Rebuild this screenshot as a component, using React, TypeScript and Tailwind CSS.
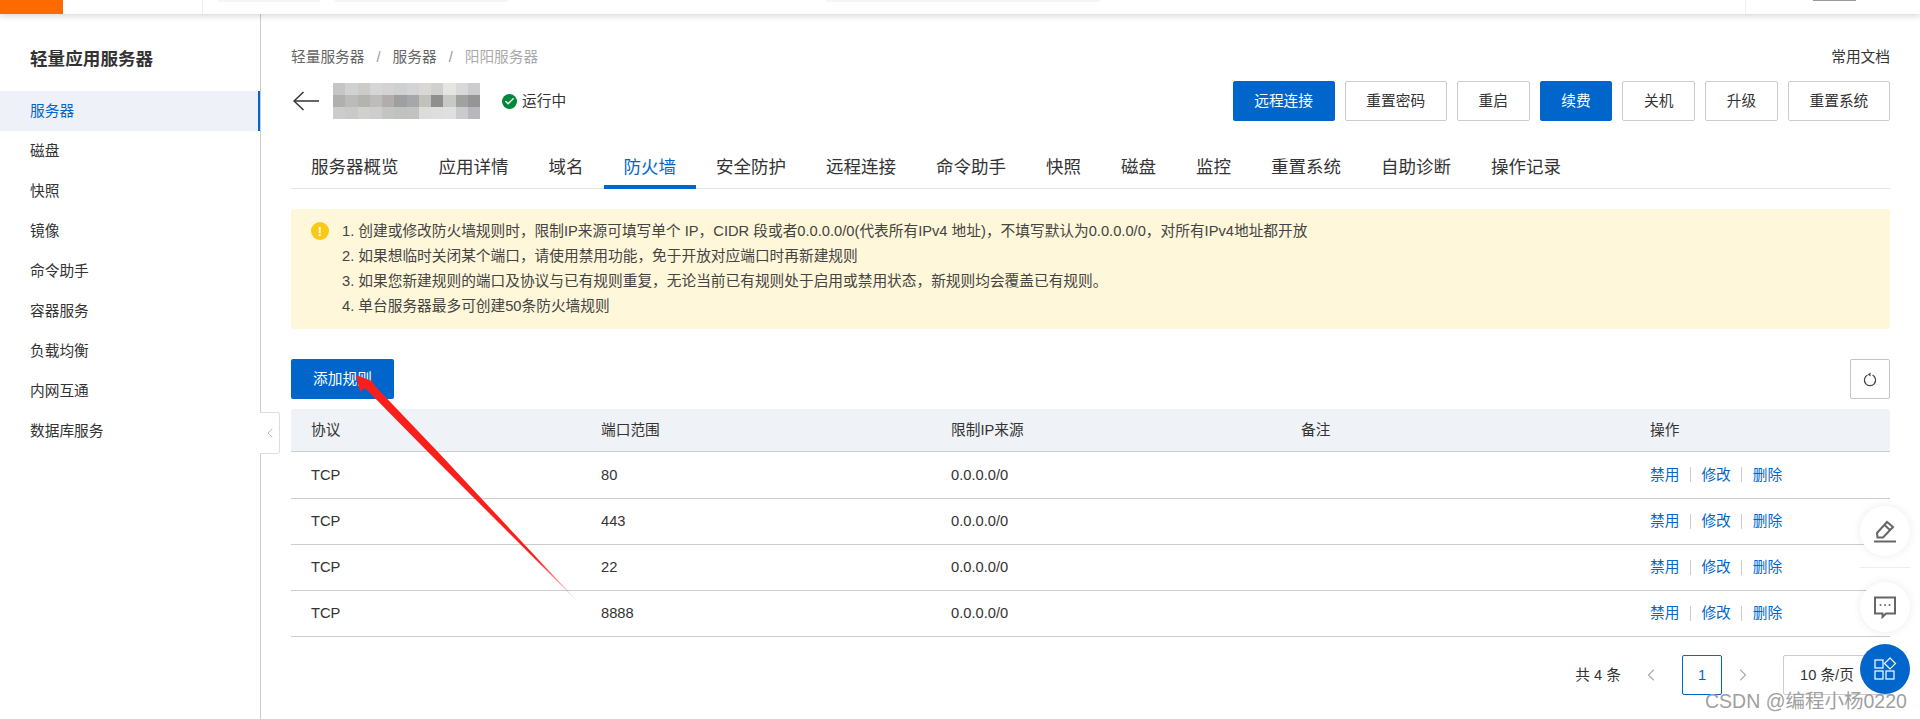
import { Check, ChevronLeft, ChevronRight } from 'lucide-react';

const menu = ['服务器', '磁盘', '快照', '镜像', '命令助手', '容器服务', '负载均衡', '内网互通', '数据库服务'];
const tabs = ['服务器概览', '应用详情', '域名', '防火墙', '安全防护', '远程连接', '命令助手', '快照', '磁盘', '监控', '重置系统', '自助诊断', '操作记录'];
const actions = [
  { label: '远程连接', primary: true },
  { label: '重置密码', primary: false },
  { label: '重启', primary: false },
  { label: '续费', primary: true },
  { label: '关机', primary: false },
  { label: '升级', primary: false },
  { label: '重置系统', primary: false },
];
const rules = ['80', '443', '22', '8888'];

// the pixelated server name
const mosaic = [
  ['#c5c5c5', '#d0d1d3', '#cccbc8', '#d6d6d6', '#d4d2d3', '#cfd0d2', '#d3d4d6', '#dbd7d4', '#d0d0d0', '#e6e5e2', '#d9d9d9', '#ccccd0'],
  ['#b0b0ae', '#bbbbbb', '#b4b4ae', '#bcbcbc', '#b4acac', '#9d9fa3', '#a6a8a8', '#c2c2bd', '#8f8f8f', '#c8c8c4', '#a0a2a0', '#959597'],
  ['#cccccc', '#c8cac8', '#d0d0cc', '#cdcdcd', '#c3c5c3', '#c0c2c0', '#c2c2c0', '#dcdcdc', '#dedede', '#e0dede', '#c8ccd0', '#b8b8bc'],
];

const App = () => {
  return (
    <div className="relative h-[719px] w-[1920px] overflow-hidden bg-white font-['Liberation_Sans','Noto_Sans_CJK_SC',sans-serif] text-[14.7px] text-[#333]">
      {/* Top bar */}
      <header className="relative z-10 flex h-[14px] shadow-[0_2px_6px_rgba(0,0,0,0.16)]">
        <div className="h-full w-[63px] bg-[#ff6a00]" />
        <div className="ml-[139px] h-full w-px bg-[#eeeeee]" />
        <div className="ml-[15px] h-[2px] w-[102px] bg-[#f5f5f5]" />
        <div className="ml-[15px] h-[2px] w-[173px] bg-[#f5f5f5]" />
        <div className="ml-[318px] h-[2px] w-[274px] bg-[#f5f5f5]" />
        <div className="ml-[645px] h-full w-px bg-[#eeeeee]" />
        <div className="ml-[67px] h-[1px] w-[43px] bg-[#999999]" />
      </header>

      <div className="flex h-[705px]">
        {/* Sidebar */}
        <aside className="relative h-full w-[261px] shrink-0 border-r border-[#cccccc]">
          <h2 className="pl-[30px] pt-[33px] text-[17.6px] font-bold leading-6">轻量应用服务器</h2>
          <nav className="mt-[20px]">
            {menu.map((item, index) => (
              <div
                key={item}
                className={
                  index === 0
                    ? 'flex h-10 items-center border-r-[2px] border-[#0066cc] bg-[#eef1f7] pl-[30px] pt-px text-[#0066cc]'
                    : 'flex h-10 items-center pl-[30px] pt-px'
                }
              >
                {item}
              </div>
            ))}
          </nav>
          <button className="absolute left-[260px] top-[398px] flex h-[42px] w-5 items-center justify-center rounded-r-[3px] border border-l-0 border-[#dddddd] bg-white text-[#bbbbbb]">
            <ChevronLeft className="h-4 w-4" strokeWidth={1.5} />
          </button>
        </aside>

        {/* Main */}
        <main className="min-w-0 flex-1 pl-[30px] pr-[30px]">
          <div className="mt-[33px] flex h-5 items-center justify-between">
            <div className="flex items-center">
              <span className="text-[#666]">轻量服务器</span>
              <span className="mx-[12px] text-[#999]">/</span>
              <span className="text-[#666]">服务器</span>
              <span className="mx-[12px] text-[#999]">/</span>
              <span className="text-[#aaa]">阳阳服务器</span>
            </div>
            <span>常用文档</span>
          </div>

          <div className="mt-[14px] flex h-10 items-center justify-between">
            <div className="flex items-center">
              <svg className="ml-[2px]" width="26" height="20" viewBox="0 0 26 20" fill="none" stroke="#333" strokeWidth="1.5">
                <path d="M1 10 H26" />
                <path d="M10.5 1 L1 10 L10.5 19" />
              </svg>
              <div className="ml-[14px] flex w-[147px] flex-col">
                {mosaic.map((row, r) => (
                  <div key={r} className="flex h-3">
                    {row.map((color, c) => (
                      <div key={c} className="h-full flex-1" style={{ backgroundColor: color }} />
                    ))}
                  </div>
                ))}
              </div>
              <div className="ml-[22px] flex h-[15px] w-[15px] items-center justify-center rounded-full bg-[#00883a] text-white">
                <Check className="h-[11px] w-[11px]" strokeWidth={3} />
              </div>
              <span className="ml-[5px]">运行中</span>
            </div>
            <div className="flex gap-[10px]">
              {actions.map(action => (
                <button
                  key={action.label}
                  className={
                    action.primary
                      ? 'h-10 rounded-[2px] border border-[#0066cc] bg-[#0066cc] px-[20.7px] text-white'
                      : 'h-10 rounded-[2px] border border-[#cccccc] bg-white px-[20.7px]'
                  }
                >
                  {action.label}
                </button>
              ))}
            </div>
          </div>

          {/* Tabs */}
          <div className="mt-[25px] flex h-[43px] border-b border-[#e1e4e8] text-[17.5px]">
            {tabs.map(tab => (
              <div
                key={tab}
                className={
                  tab === '防火墙'
                    ? 'h-[43px] border-b-4 border-[#0066cc] px-5 pt-[9px] leading-6 text-[#0066cc]'
                    : 'h-[43px] px-5 pt-[9px] leading-6'
                }
              >
                {tab}
              </div>
            ))}
          </div>

          {/* Notice */}
          <div className="mt-[20px] flex h-[120px] rounded-[3px] bg-[#fef7d9] pl-[20px] pt-[10px]">
            <div className="mt-[3px] flex h-[18px] w-[18px] shrink-0 items-center justify-center rounded-full bg-[#fbc815] text-[13px] font-bold leading-none text-white">!</div>
            <div className="ml-[13px] leading-[25px] text-[#444]">
              <p>1. 创建或修改防火墙规则时，限制IP来源可填写单个 IP，CIDR 段或者0.0.0.0/0(代表所有IPv4 地址)，不填写默认为0.0.0.0/0，对所有IPv4地址都开放</p>
              <p>2. 如果想临时关闭某个端口，请使用禁用功能，免于开放对应端口时再新建规则</p>
              <p>3. 如果您新建规则的端口及协议与已有规则重复，无论当前已有规则处于启用或禁用状态，新规则均会覆盖已有规则。</p>
              <p>4. 单台服务器最多可创建50条防火墙规则</p>
            </div>
          </div>

          <div className="mt-[30px] flex items-center justify-between">
            <button className="h-10 w-[103px] rounded-[2px] bg-[#0066cc] text-white">添加规则</button>
            <button className="flex h-10 w-10 items-center justify-center rounded-[2px] border border-[#c4c4c4]">
              <svg width="14" height="15" viewBox="0 0 14 15" fill="none" stroke="#444" strokeWidth="1.2">
                <path d="M4.5 3 A5.6 5.6 0 1 0 9.5 3" />
                <path d="M7.5 0.5 L7.5 4.5 L4.8 2.5 Z" fill="#444" stroke="none" />
              </svg>
            </button>
          </div>

          {/* Rules table */}
          <div className="mt-[10px]">
            <div className="grid h-[43px] grid-cols-[290px_350px_350px_349px_1fr] items-center rounded-t-[3px] border-b border-[#cccccc] bg-[#eff2f7] pl-5">
              <span>协议</span>
              <span>端口范围</span>
              <span>限制IP来源</span>
              <span>备注</span>
              <span>操作</span>
            </div>
            {rules.map((port, index) => (
              <div
                key={port}
                className={
                  index === 0
                    ? 'grid h-[47px] grid-cols-[290px_350px_350px_349px_1fr] items-center border-b border-[#cccccc] pl-5'
                    : 'grid h-[46px] grid-cols-[290px_350px_350px_349px_1fr] items-center border-b border-[#cccccc] pl-5'
                }
              >
                <span>TCP</span>
                <span>{port}</span>
                <span>0.0.0.0/0</span>
                <span />
                <div className="flex items-center text-[#0066cc]">
                  <span>禁用</span>
                  <span className="mx-[10.5px] h-[15px] w-px bg-[#cccccc]" />
                  <span>修改</span>
                  <span className="mx-[10.5px] h-[15px] w-px bg-[#cccccc]" />
                  <span>删除</span>
                </div>
              </div>
            ))}
          </div>

          {/* Pagination */}
          <div className="mt-[18px] flex items-center justify-end">
            <span>共 4 条</span>
            <span className="ml-[15px] flex h-10 w-[30px] items-center justify-center text-[#aaa]">
              <ChevronLeft className="h-5 w-5" strokeWidth={1.3} />
            </span>
            <span className="ml-[16px] flex h-10 w-10 items-center justify-center rounded-[2px] border border-[#0066cc] text-[#0066cc]">1</span>
            <span className="ml-[6px] flex h-10 w-[30px] items-center justify-center text-[#aaa]">
              <ChevronRight className="h-5 w-5" strokeWidth={1.3} />
            </span>
            <span className="ml-[25px] flex h-10 w-[107px] items-center rounded-[2px] border border-[#cccccc] pl-4">10 条/页</span>
          </div>
        </main>
      </div>

      {/* Floating helpers */}
      <div className="absolute right-[10px] top-[506px] flex w-[50px] flex-col">
        <div className="flex h-[50px] w-[50px] items-center justify-center rounded-full bg-white shadow-[0_0_10px_rgba(0,0,0,0.08)]">
          <svg width="24" height="24" viewBox="0 0 24 24" fill="none" stroke="#666" strokeWidth="2">
            <path d="M4 14 L14 3 L20 8 L10 18.5 L4.5 18.5 Z" />
            <path d="M11.5 6 L17 11" />
            <path d="M1 22.5 H23" />
          </svg>
        </div>
        <div className="mt-[11px] h-px w-[50px] bg-[#eeeeee]" />
        <div className="mt-[14px] flex h-[50px] w-[50px] items-center justify-center rounded-full bg-white shadow-[0_0_10px_rgba(0,0,0,0.08)]">
          <svg width="24" height="24" viewBox="0 0 24 24" fill="none" stroke="#666" strokeWidth="2">
            <path d="M2 2.5 H22 V18.5 H13 L9.5 22 V18.5 H2 Z" />
            <circle cx="7.5" cy="10" r="1" fill="#666" stroke="none" />
            <circle cx="12" cy="10" r="1" fill="#666" stroke="none" />
            <circle cx="16.5" cy="10" r="1" fill="#666" stroke="none" />
          </svg>
        </div>
        <div className="mt-[12px] flex h-[50px] w-[50px] items-center justify-center rounded-full bg-[#0066cc]">
          <svg width="24" height="24" viewBox="0 0 24 24" fill="none" stroke="#fff" strokeWidth="1.2">
            <rect x="2" y="3" width="8" height="8" />
            <rect x="2" y="14" width="8" height="8" />
            <rect x="13" y="14" width="8" height="8" />
            <path d="M17 1 L22.5 6.5 L17 12 L11.5 6.5 Z" />
          </svg>
        </div>
      </div>

      {/* Annotation arrow */}
      <svg className="pointer-events-none absolute left-0 top-0" width="1920" height="719" viewBox="0 0 1920 719">
        <defs>
          <linearGradient id="fade" gradientUnits="userSpaceOnUse" x1="356" y1="375" x2="580" y2="604">
            <stop offset="0" stopColor="#f9201c" />
            <stop offset="0.8" stopColor="#f9201c" />
            <stop offset="1" stopColor="#f9201c" stopOpacity="0.1" />
          </linearGradient>
        </defs>
        <polygon points="356,375 372,381 375,386 438,452 580,604 428,452 365,388 360,392" fill="url(#fade)" />
      </svg>

      <div className="absolute left-[1705px] top-[689px] whitespace-nowrap text-[19.5px] leading-6 text-[#a0a0a0]">CSDN @编程小杨0220</div>
    </div>
  );
};

export default App;
